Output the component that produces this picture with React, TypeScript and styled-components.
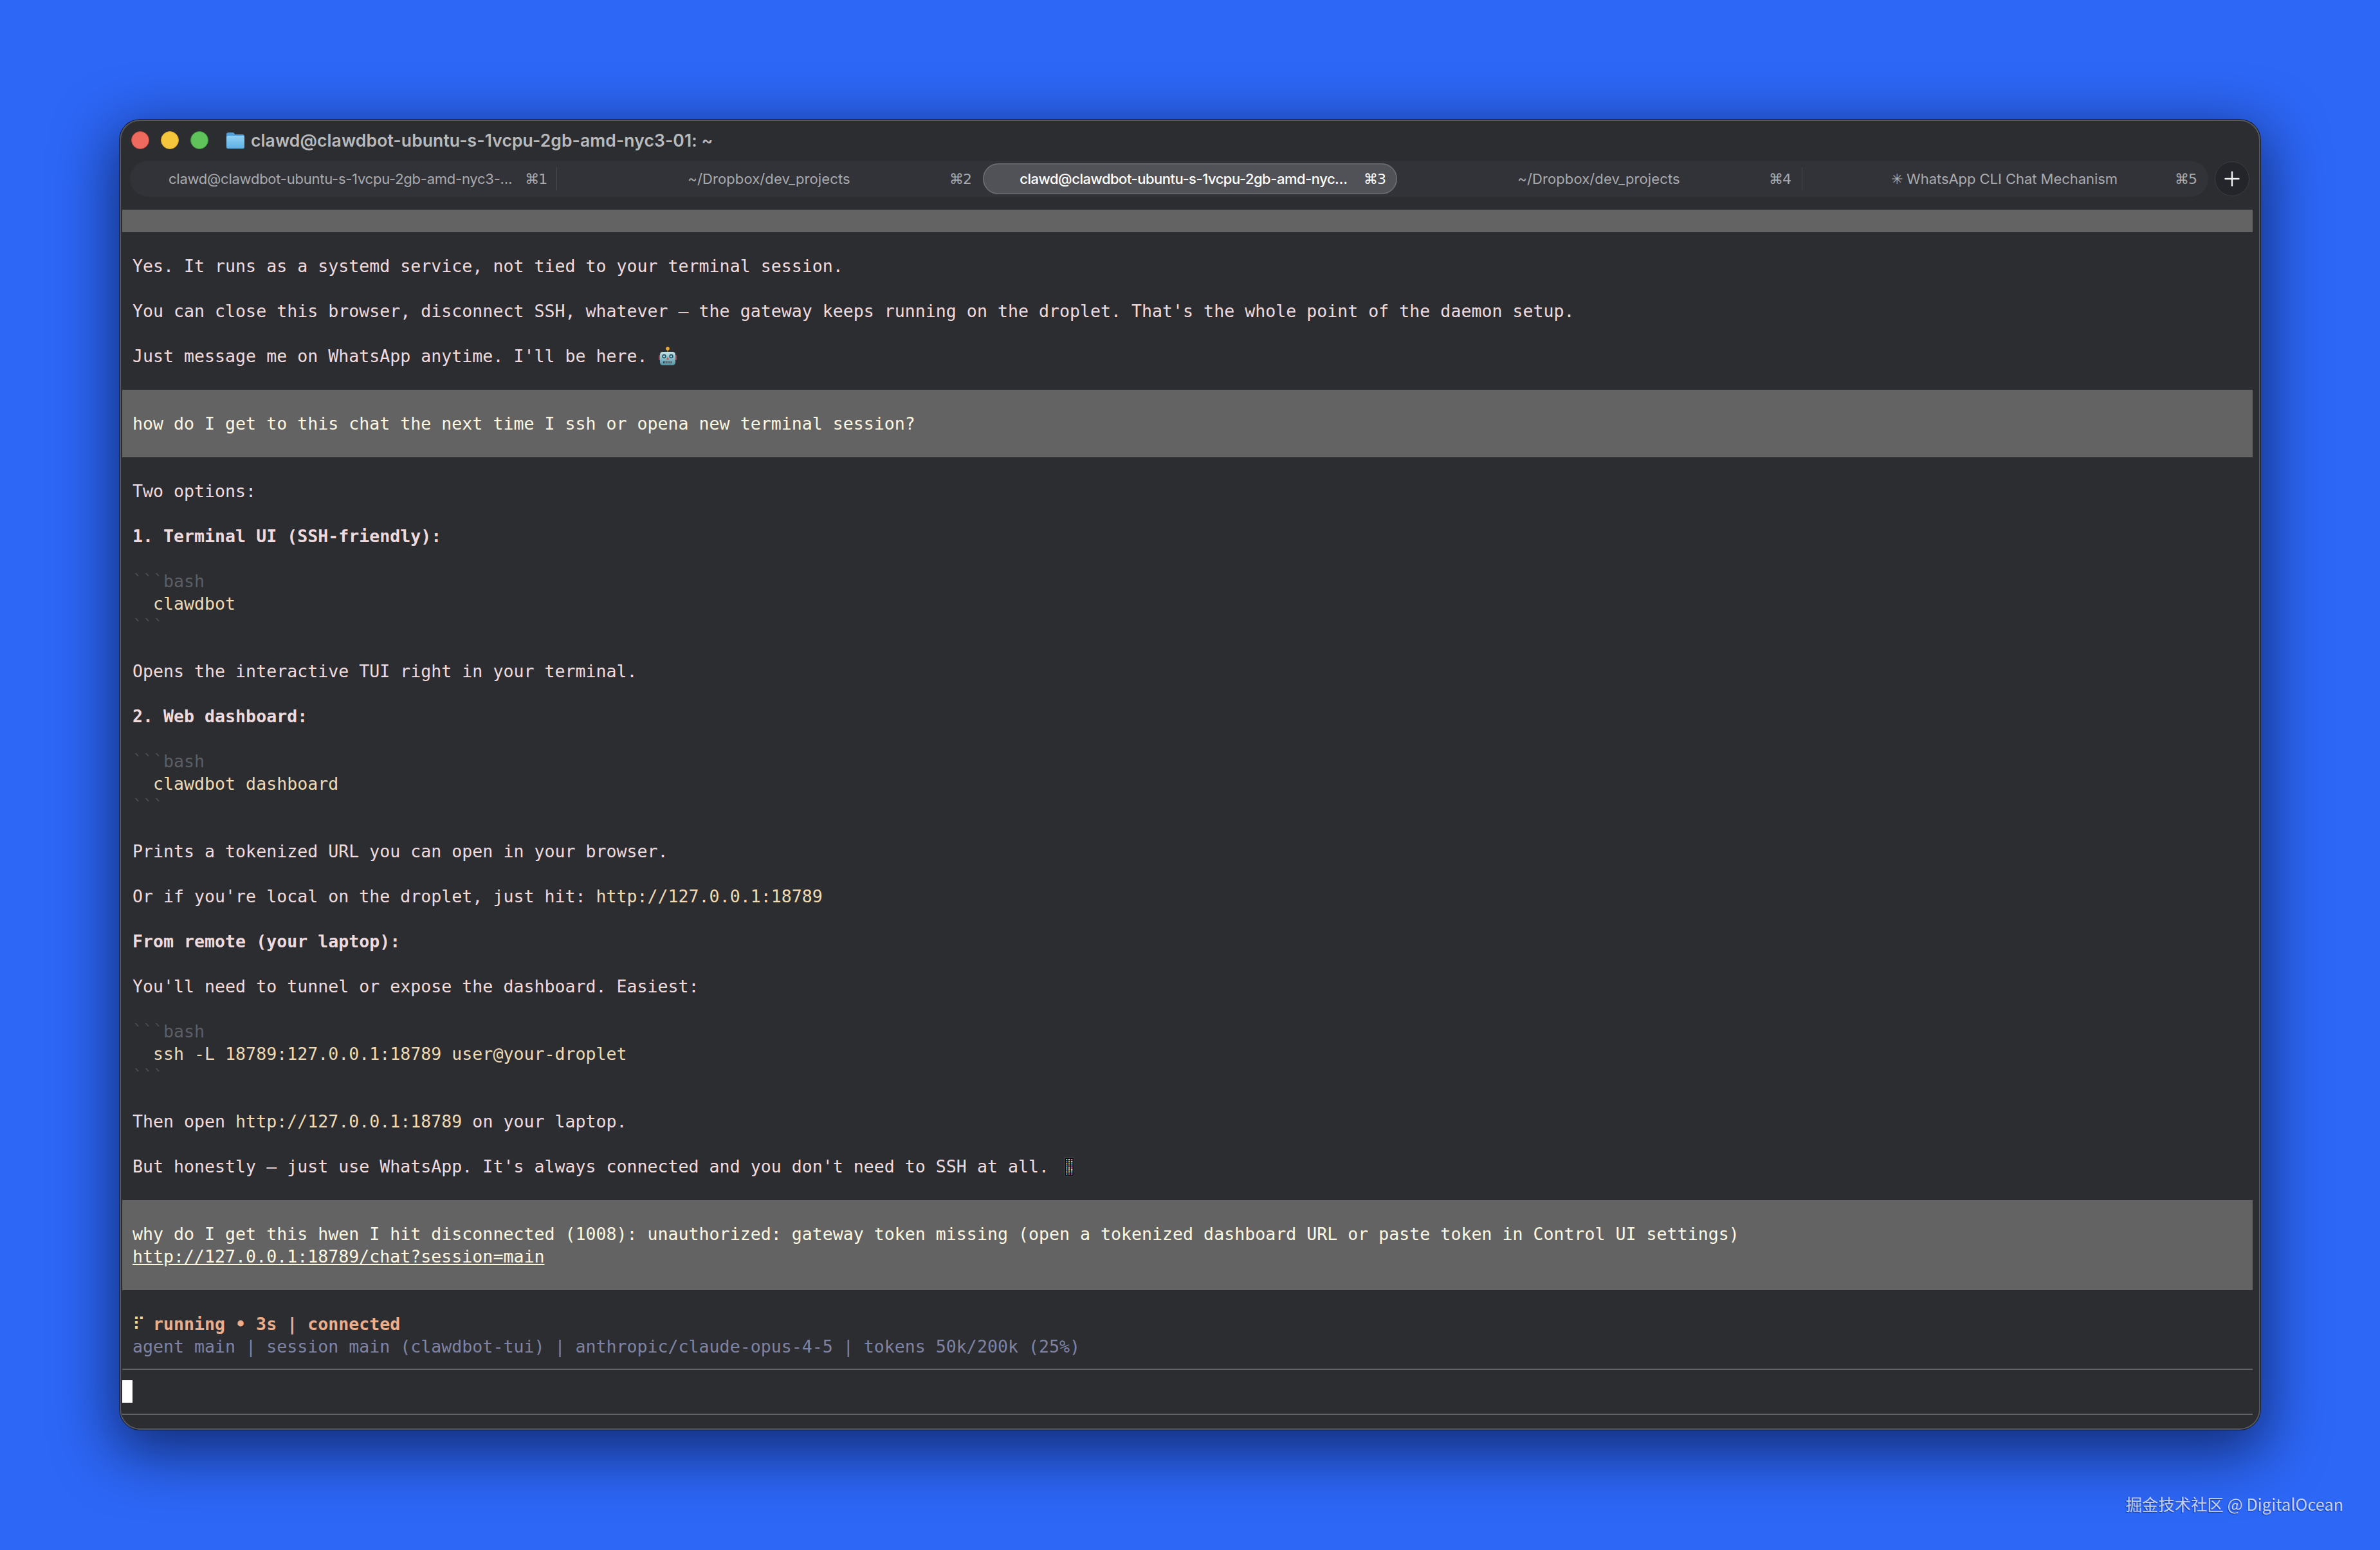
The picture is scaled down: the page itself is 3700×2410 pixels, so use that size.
import React from 'react';
import styled, {createGlobalStyle} from 'styled-components';
import {Plus} from 'lucide-react';

const GlobalStyle = createGlobalStyle`
  html, body {
    margin: 0;
    padding: 0;
    background: #2d67f6;
  }
`;

type Tone = 'body' | 'code' | 'fence' | 'user' | 'status' | 'meta';

const toneColors: Record<Tone, string> = {
    body: '#efdadd',
    code: '#efdab2',
    fence: '#5b5e63',
    user: '#fbf7e0',
    status: '#efae8a',
    meta: '#7f83a3',
};

interface TabData {
    title: string;
    shortcut: string;
    inset: number;
    width: number;
    tracking: number;
    active?: boolean;
    divider?: boolean;
}

const tabs: TabData[] = [
    {title: 'clawd@clawdbot-ubuntu-s-1vcpu-2gb-amd-nyc3-…', shortcut: '⌘1', inset: 60, width: 664, tracking: -0.25, divider: true},
    {title: '~/Dropbox/dev_projects', shortcut: '⌘2', inset: 69, width: 662, tracking: 0.1},
    {title: 'clawd@clawdbot-ubuntu-s-1vcpu-2gb-amd-nyc…', shortcut: '⌘3', inset: 52, width: 644, tracking: -0.49, active: true},
    {title: '~/Dropbox/dev_projects', shortcut: '⌘4', inset: 69, width: 630, tracking: 0.1, divider: true},
    {title: '✳ WhatsApp CLI Chat Mechanism', shortcut: '⌘5', inset: 69, width: 631, tracking: -0.05},
];

const FolderIcon = () => (
    <FolderSvg viewBox="0 0 28 25">
        <defs>
            <linearGradient id="folderFront" x1="0" y1="0" x2="0" y2="1">
                <stop offset="0" stopColor="#8fd0f5" />
                <stop offset="1" stopColor="#5fb0e6" />
            </linearGradient>
        </defs>
        <path d="M0 3a3 3 0 0 1 3-3h6.5c1.2 0 1.9.5 2.6 1.3L13.4 3H25a3 3 0 0 1 3 3v4H0z" fill="#4f9fdc" />
        <rect x="0" y="5" width="28" height="20" rx="2.5" fill="url(#folderFront)" />
    </FolderSvg>
);

const RobotEmoji = () => (
    <EmojiSvg viewBox="0 0 30 30" width="30" height="30">
        <defs>
            <linearGradient id="robotFace" x1="0" y1="0" x2="0" y2="1">
                <stop offset="0" stopColor="#c5e3e6" />
                <stop offset="1" stopColor="#4f95a8" />
            </linearGradient>
        </defs>
        <rect x="1" y="13" width="3" height="8" rx="1.5" fill="#9a4a55" />
        <rect x="26" y="13" width="3" height="8" rx="1.5" fill="#9a4a55" />
        <rect x="14" y="4" width="2" height="6" fill="#8b6a3a" />
        <circle cx="15" cy="3" r="2.8" fill="#f0a92e" />
        <rect x="3" y="8" width="24" height="21" rx="4.5" fill="url(#robotFace)" />
        <circle cx="9.5" cy="15" r="3.2" fill="#2e4f5e" />
        <circle cx="9.5" cy="15" r="1.6" fill="#7fe4f5" />
        <circle cx="20.5" cy="15" r="3.2" fill="#2e4f5e" />
        <circle cx="20.5" cy="15" r="1.6" fill="#7fe4f5" />
        <path d="M15 16l2.2 4h-4.4z" fill="#c9514f" />
        <rect x="8" y="22.5" width="14" height="3.5" rx="1" fill="#26404c" />
        <path d="M11 22.5v3.5M14 22.5v3.5M17 22.5v3.5M20 22.5v3.5" stroke="#b9d3d6" strokeWidth="1" />
    </EmojiSvg>
);

const tofuColors = ['#63c28a', '#e6e6e6', '#d05a6a', '#6a7fd8', '#56b7d0', '#d0d0d0', '#e09a4a', '#a05ad0', '#f0c040', '#4aa0e0', '#e06a9a', '#70d0a0'];

const ColorGlyph = () => (
    <TofuSvg viewBox="0 0 15 30" width="15" height="30">
        <rect x="0" y="0" width="15" height="30" rx="1" fill="#42454a" />
        <rect x="1" y="1" width="13" height="28" fill="#0c0d0f" />
        {Array.from({length: 24}).map((_, i) => (
            <rect
                key={i}
                x={2 + (i % 3) * 4}
                y={3 + Math.floor(i / 3) * 3.2}
                width="2.4"
                height="2.2"
                fill={tofuColors[(i * 5) % tofuColors.length]}
            />
        ))}
    </TofuSvg>
);

const Window: React.FC = () => (
    <Frame>
        <TitleBar>
            <Lights>
                <Light $fill="#ee6a5f" $edge="#c9473d" />
                <Light $fill="#f5c63c" $edge="#d6a42a" />
                <Light $fill="#5fc25a" $edge="#3f9b3e" />
            </Lights>
            <FolderIcon />
            <WindowTitle>clawd@clawdbot-ubuntu-s-1vcpu-2gb-amd-nyc3-01: ~</WindowTitle>
        </TitleBar>

        <TabRow>
            <TabShelf>
                {tabs.map((tab) => (
                    <Tab key={tab.shortcut} $active={tab.active} $divider={tab.divider} $inset={tab.inset} $width={tab.width}>
                        <TabTitle $tracking={tab.tracking}>{tab.title}</TabTitle>
                        <TabShortcut>{tab.shortcut}</TabShortcut>
                    </Tab>
                ))}
            </TabShelf>
            <NewTab>
                <Plus size={36} strokeWidth={1.6} color="#f2f2f2" />
            </NewTab>
        </TabRow>

        <Terminal>
            <UserBar />
            <Line />
            <Line>Yes. It runs as a systemd service, not tied to your terminal session.</Line>
            <Line />
            <Line>You can close this browser, disconnect SSH, whatever — the gateway keeps running on the droplet. That's the whole point of the daemon setup.</Line>
            <Line />
            <Line>Just message me on WhatsApp anytime. I'll be here. <RobotEmoji /></Line>
            <Line />
            <UserBar>
                <Line $tone="user">how do I get to this chat the next time I ssh or opena new terminal session?</Line>
            </UserBar>
            <Line />
            <Line>Two options:</Line>
            <Line />
            <Line $bold>1. Terminal UI (SSH-friendly):</Line>
            <Line />
            <CodeFence lang="bash" />
            <Line $tone="code">{'  clawdbot'}</Line>
            <CodeFence />
            <Line />
            <Line>Opens the interactive TUI right in your terminal.</Line>
            <Line />
            <Line $bold>2. Web dashboard:</Line>
            <Line />
            <CodeFence lang="bash" />
            <Line $tone="code">{'  clawdbot dashboard'}</Line>
            <CodeFence />
            <Line />
            <Line>Prints a tokenized URL you can open in your browser.</Line>
            <Line />
            <Line>Or if you're local on the droplet, just hit: <InlineCode>http://127.0.0.1:18789</InlineCode></Line>
            <Line />
            <Line $bold>From remote (your laptop):</Line>
            <Line />
            <Line>You'll need to tunnel or expose the dashboard. Easiest:</Line>
            <Line />
            <CodeFence lang="bash" />
            <Line $tone="code">{'  ssh -L 18789:127.0.0.1:18789 user@your-droplet'}</Line>
            <CodeFence />
            <Line />
            <Line>Then open <InlineCode>http://127.0.0.1:18789</InlineCode> on your laptop.</Line>
            <Line />
            <Line>But honestly — just use WhatsApp. It's always connected and you don't need to SSH at all. <ColorGlyph /></Line>
            <Line />
            <UserBar>
                <Line $tone="user">why do I get this hwen I hit disconnected (1008): unauthorized: gateway token missing (open a tokenized dashboard URL or paste token in Control UI settings)</Line>
                <Line $tone="user"><u>http://127.0.0.1:18789/chat?session=main</u></Line>
            </UserBar>
            <Line />
            <Line $tone="status" $bold><Spinner>⠏</Spinner> running • 3s | connected</Line>
            <Line $tone="meta">agent main | session main (clawdbot-tui) | anthropic/claude-opus-4-5 | tokens 50k/200k (25%)</Line>
            <Rule />
            <PromptRow><Cursor /></PromptRow>
            <Rule />
        </Terminal>
    </Frame>
);

const CodeFence: React.FC<{lang?: string}> = ({lang}) => (
    <Line $tone="fence">
        <Ticks>```</Ticks>{lang}
    </Line>
);

const App: React.FC = () => (
    <Page>
        <GlobalStyle />
        <Window />
        <Watermark>掘金技术社区 @ DigitalOcean</Watermark>
    </Page>
);

export default App;

const Page = styled.div`
  position: relative;
  box-sizing: border-box;
  width: 3700px;
  height: 2410px;
  padding: 186px 186px 0;
  overflow: hidden;
  background: #2d67f6;
`;

const Frame = styled.div`
  box-sizing: border-box;
  width: 3328px;
  height: 2037px;
  border-radius: 32px;
  background: #2b2d31;
  box-shadow:
    inset 0 0 0 2px #54575d,
    0 0 0 1px #141b2e,
    0 26px 90px 10px rgba(4, 10, 40, 0.62);
  overflow: hidden;
`;

const TitleBar = styled.div`
  display: flex;
  align-items: center;
  height: 64px;
  padding-left: 18px;
  box-sizing: border-box;
  font-family: Inter, "Liberation Sans", sans-serif;
`;

const Lights = styled.div`
  display: flex;
  gap: 18px;
  margin-right: 28px;
`;

const Light = styled.span<{$fill: string; $edge: string}>`
  display: block;
  box-sizing: border-box;
  width: 28px;
  height: 28px;
  border-radius: 50%;
  background: ${(p) => p.$fill};
  border: 1px solid ${(p) => p.$edge};
`;

const FolderSvg = styled.svg`
  width: 28px;
  height: 25px;
  margin-right: 10px;
`;

const WindowTitle = styled.div`
  font-size: 26.5px;
  font-weight: 600;
  color: #b9babc;
  white-space: nowrap;
  letter-spacing: 0.1px;
`;

const TabRow = styled.div`
  display: flex;
  align-items: center;
  height: 56px;
  margin: 0 0 20px 16px;
  gap: 10px;
`;

const TabShelf = styled.div`
  display: flex;
  align-items: center;
  height: 56px;
  border-radius: 28px;
  background: #313338;
  font-family: Inter, "Liberation Sans", sans-serif;
`;

const Tab = styled.div<{$active?: boolean; $divider?: boolean; $inset: number; $width: number}>`
  position: relative;
  box-sizing: border-box;
  display: flex;
  align-items: center;
  width: ${(p) => p.$width}px;
  height: 48px;
  padding: 0 18px 0 ${(p) => p.$inset}px;
  border-radius: 24px;
  font-size: 22px;
  white-space: nowrap;
  color: ${(p) => (p.$active ? '#ffffff' : '#a9aaad')};
  font-weight: ${(p) => (p.$active ? 500 : 400)};
  background: ${(p) => (p.$active ? '#515257' : 'transparent')};
  box-shadow: ${(p) => (p.$active ? 'inset 0 0 0 1.5px #6c6d72' : 'none')};

  &::after {
    content: ${(p) => (p.$divider ? "''" : 'none')};
    position: absolute;
    right: 0;
    top: 6px;
    bottom: 6px;
    width: 1px;
    background: #45474c;
  }
`;

const TabTitle = styled.span<{$tracking: number}>`
  flex: 1;
  text-align: center;
  letter-spacing: ${(p) => p.$tracking}px;
`;

const TabShortcut = styled.span`
  margin-left: 20px;
  font-size: 22px;
  font-family: "DejaVu Sans", Inter, sans-serif;
  letter-spacing: -1px;
`;

const NewTab = styled.div`
  display: flex;
  align-items: center;
  justify-content: center;
  box-sizing: border-box;
  width: 54px;
  height: 54px;
  border-radius: 50%;
  background: #23252a;
  border: 1px solid #3b3d43;
`;

const Terminal = styled.div`
  margin: 0 12px 0 4px;
  font-family: "DejaVu Sans Mono", "Liberation Mono", monospace;
  font-size: 26.6px;
`;

const UserBar = styled.div`
  min-height: 35px;
  padding: ${(p) => (p.children ? '35px 0' : '0')};
  background: #626362;
`;

const Line = styled.div<{$tone?: Tone; $bold?: boolean}>`
  height: 35px;
  padding-left: 16px;
  line-height: 35px;
  white-space: pre;
  color: ${(p) => toneColors[p.$tone ?? 'body']};
  font-weight: ${(p) => (p.$bold ? 700 : 400)};
`;

const InlineCode = styled.span`
  color: ${toneColors.code};
`;

const Ticks = styled.span`
  color: #4a4d52;
`;

const Spinner = styled.span`
  display: inline-block;
  width: 16px;
  color: #f4dc8e;
  font-weight: 400;
`;

const EmojiSvg = styled.svg`
  display: inline-block;
  vertical-align: -6px;
`;

const TofuSvg = styled(EmojiSvg)`
  margin-left: 8px;
`;

const Rule = styled.div`
  display: flex;
  align-items: center;
  height: 35px;

  &::before {
    content: '';
    flex: 1;
    height: 2px;
    background: #5f6266;
  }
`;

const PromptRow = styled.div`
  height: 35px;
`;

const Cursor = styled.div`
  width: 16px;
  height: 35px;
  background: #ffffff;
`;

const Watermark = styled.div`
  position: absolute;
  right: 57px;
  bottom: 54px;
  font-family: "Noto Sans CJK SC", "Noto Sans", sans-serif;
  font-size: 25.4px;
  line-height: 36px;
  color: rgba(235, 240, 255, 0.82);
  text-shadow: -1px 1px 1px rgba(10, 20, 60, 0.55);
  white-space: nowrap;
`;
